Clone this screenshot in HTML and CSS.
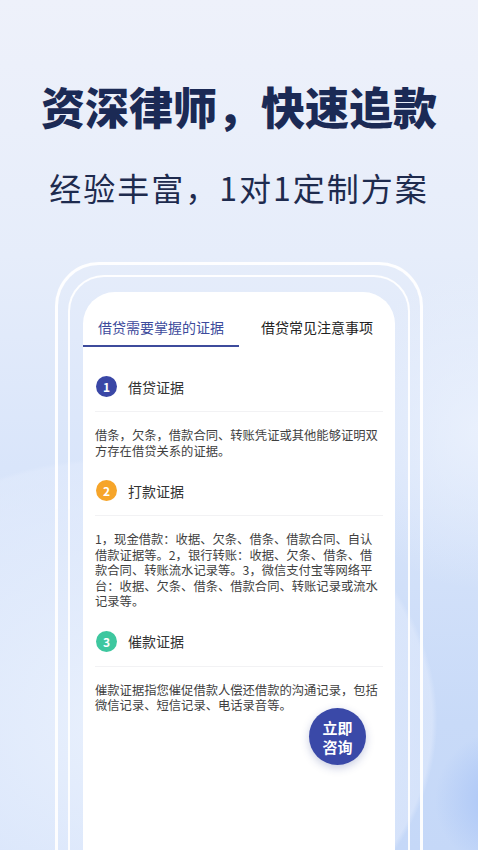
FILE: index.html
```html
<!DOCTYPE html>
<html lang="zh-CN">
<head>
    <meta charset="UTF-8">
    <meta name="viewport" content="width=device-width, initial-scale=1.0">
    <title>资深律师，快速追款</title>
    <link rel="stylesheet" href="styles.css">
</head>
<body>
    <div class="page">
        <div class="hero">
            <h1 class="title">资深律师，快速追款</h1>
            <p class="subtitle">经验丰富，1对1定制方案</p>
        </div>

        <div class="frame-outer">
            <div class="frame-inner">
                <div class="card">
                    <div class="tabs">
                        <div class="tab active">借贷需要掌握的证据</div>
                        <div class="tab">借贷常见注意事项</div>
                    </div>

                    <div class="content">
                        <div class="section">
                            <div class="section-head">
                                <span class="num num-blue">1</span>
                                <span class="section-title">借贷证据</span>
                            </div>
                            <p class="section-body">借条，欠条，借款合同、转账凭证或其他能够证明双方存在借贷关系的证据。</p>
                        </div>

                        <div class="section">
                            <div class="section-head">
                                <span class="num num-orange">2</span>
                                <span class="section-title">打款证据</span>
                            </div>
                            <p class="section-body">1，现金借款：收据、欠条、借条、借款合同、自认借款证据等。2，银行转账：收据、欠条、借条、借款合同、转账流水记录等。3，微信支付宝等网络平台：收据、欠条、借条、借款合同、转账记录或流水记录等。</p>
                        </div>

                        <div class="section">
                            <div class="section-head">
                                <span class="num num-green">3</span>
                                <span class="section-title">催款证据</span>
                            </div>
                            <p class="section-body">催款证据指您催促借款人偿还借款的沟通记录，包括微信记录、短信记录、电话录音等。</p>
                        </div>
                    </div>

                    <button class="consult">立即<br>咨询</button>
                </div>
            </div>
        </div>
    </div>
</body>
</html>
```

FILE: styles.css
```css
body {
    margin: 0;
    font-family: "Noto Sans CJK SC", "Noto Sans", sans-serif;
}

.page {
    width: 478px;
    height: 850px;
    overflow: hidden;
    display: flex;
    flex-direction: column;
    background:
        radial-gradient(circle at 505px 800px, #9fbcf4 0, #b4ccf7 30px, rgba(200, 218, 248, 0) 70px),
        radial-gradient(ellipse 140px 160px at 478px 430px, rgba(236, 242, 253, 0.8) 0, rgba(236, 242, 253, 0) 100%),
        radial-gradient(ellipse 520px 430px at 120px 720px, rgba(234, 241, 253, 0.95) 0, rgba(226, 235, 252, 0.55) 60%, rgba(220, 231, 251, 0) 61%),
        linear-gradient(180deg, #eef1fa 0%, #e6edfa 30%, #d9e5fa 55%, #c8daf8 85%, #c5d8f8 100%);
}

.hero {
    text-align: center;
    color: #1b2a55;
    padding-top: 84px;
}

.title {
    margin: 0;
    font-size: 44px;
    line-height: 44px;
    font-weight: 900;
    letter-spacing: 0;
}

.subtitle {
    margin: 43px 0 0;
    font-size: 32px;
    line-height: 32px;
    font-weight: 400;
    letter-spacing: 2px;
    color: #1e2b4e;
}

.frame-outer {
    flex: 1;
    display: flex;
    flex-direction: column;
    margin: 59px 55px 0;
    padding: 10px 10px 0;
    border: 3px solid rgba(255, 255, 255, 0.95);
    border-bottom: none;
    border-radius: 44px 44px 0 0;
}

.frame-inner {
    flex: 1;
    display: flex;
    flex-direction: column;
    padding: 15px 13px 0;
    border: 2px solid rgba(255, 255, 255, 0.95);
    border-bottom: none;
    border-radius: 36px 36px 0 0;
}

.card {
    flex: 1;
    position: relative;
    background-color: #fff;
    border-radius: 32px 32px 0 0;
}

.tabs {
    display: flex;
}

.tab {
    flex: 1;
    text-align: center;
    font-size: 14px;
    line-height: 18px;
    color: #222;
    padding: 26px 0 9px;
    border-bottom: 2px solid transparent;
}

.tab.active {
    color: #3d4b9c;
    border-bottom-color: #3d4b9c;
}

.content {
    padding: 8px 12px 0;
}

.section {
    margin-top: 21px;
}

.section-head {
    display: flex;
    align-items: center;
    padding: 0 0 14px 1px;
    border-bottom: 1px solid #f2f2f4;
}

.num {
    width: 21px;
    height: 21px;
    border-radius: 50%;
    color: #fff;
    font-size: 12px;
    line-height: 21px;
    text-align: center;
    font-weight: 700;
}

.num-blue {
    background-color: #3a47a6;
}

.num-orange {
    background-color: #f6a52a;
}

.num-green {
    background-color: #3ec79f;
}

.section-title {
    margin-left: 11px;
    font-size: 14px;
    color: #333;
}

.section-body {
    margin: 0;
    padding-top: 16px;
    font-size: 12.3px;
    line-height: 15.5px;
    color: #3f3f3f;
}

.consult {
    position: absolute;
    left: 226px;
    top: 416px;
    width: 57px;
    height: 57px;
    border: none;
    border-radius: 50%;
    background-color: #3a49a8;
    color: #fff;
    font-family: inherit;
    font-size: 15px;
    line-height: 19px;
    font-weight: 700;
    padding: 0;
    box-shadow: 0 3px 8px rgba(40, 60, 140, 0.25);
}
```
